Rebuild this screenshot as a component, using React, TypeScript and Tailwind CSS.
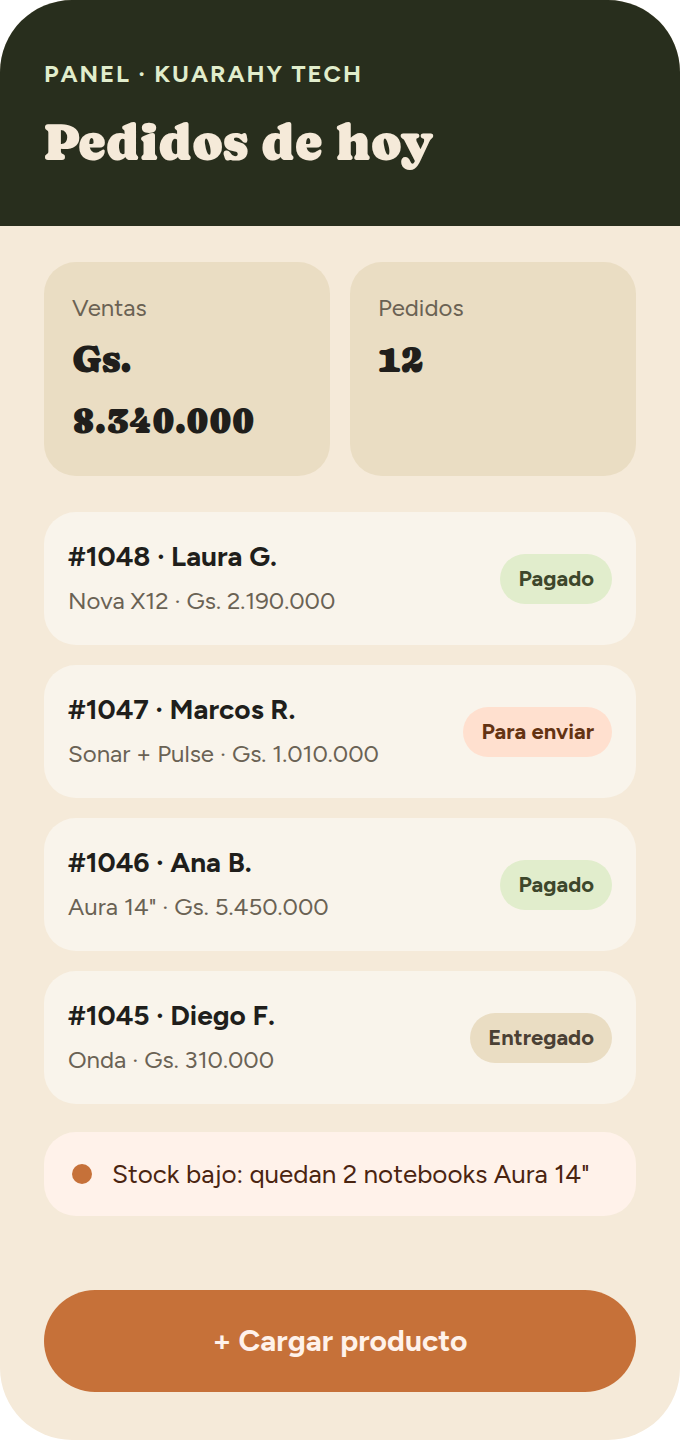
type OrderStatus = 'Pagado' | 'Para enviar' | 'Entregado';

interface Order {
  id: string;
  customer: string;
  detail: string;
  status: OrderStatus;
}

const orders: Order[] = [
  { id: '1048', customer: 'Laura G.', detail: 'Nova X12 · Gs. 2.190.000', status: 'Pagado' },
  { id: '1047', customer: 'Marcos R.', detail: 'Sonar + Pulse · Gs. 1.010.000', status: 'Para enviar' },
  { id: '1046', customer: 'Ana B.', detail: 'Aura 14" · Gs. 5.450.000', status: 'Pagado' },
  { id: '1045', customer: 'Diego F.', detail: 'Onda · Gs. 310.000', status: 'Entregado' },
];

const statusStyles: Record<OrderStatus, string> = {
  Pagado: 'bg-[#e1edcc] text-[#3d472b]',
  'Para enviar': 'bg-[#ffe0cf] text-[#643312]',
  Entregado: 'bg-[#eaddc3] text-[#4a4034]',
};

const stats = [
  { label: 'Ventas', value: 'Gs. 8.340.000' },
  { label: 'Pedidos', value: '12' },
];

const App = () => {
  return (
    <div className="min-h-screen bg-white font-['Figtree','Lato','Noto_Sans',sans-serif]">
      <main className="min-h-screen overflow-hidden rounded-[72px] bg-[#f5ead9] text-[#201e1b]">
        <header className="bg-[#282e1d] px-11 pt-14 pb-[42px]">
          <p className="text-2xl leading-9 font-bold tracking-[0.08em] text-[#e1edcc]">PANEL · KUARAHY TECH</p>
          <h1 className="mt-2 font-['Caprasimo','DejaVu_Serif',serif] text-[52px] leading-[84px] font-normal text-[#f5ead9]">
            Pedidos de hoy
          </h1>
        </header>

        <div className="px-11 pt-9 pb-12">
          <section className="grid grid-cols-2 gap-5">
            {stats.map((stat) => (
              <div key={stat.label} className="rounded-[32px] bg-[#eaddc3] px-7 pt-7 pb-[25px]">
                <p className="text-2xl leading-9 text-[#6a6254]">{stat.label}</p>
                <p className="mt-[3px] font-['Caprasimo','DejaVu_Serif',serif] text-[38px] leading-[61px]">{stat.value}</p>
              </div>
            ))}
          </section>

          <ul className="mt-9 flex flex-col gap-5">
            {orders.map((order) => (
              <li
                key={order.id}
                className="flex items-center justify-between rounded-[32px] bg-[#f9f4eb] p-6"
              >
                <div>
                  <p className="text-[28px] leading-[41px] font-bold">
                    #{order.id} · {order.customer}
                  </p>
                  <p className="mt-1 text-2xl leading-10 text-[#6a6254]">{order.detail}</p>
                </div>
                <span className={`rounded-full px-[18px] py-2 text-[22px] leading-[34px] font-bold ${statusStyles[order.status]}`}>
                  {order.status}
                </span>
              </li>
            ))}
          </ul>

          <div className="mt-7 flex items-center gap-5 rounded-[32px] bg-[#fff2ea] px-7 py-[22px] text-[#4a2410]">
            <span className="size-5 shrink-0 rounded-full bg-[#c67139]" />
            <p className="text-[26px] leading-10">Stock bajo: quedan 2 notebooks Aura 14"</p>
          </div>

          <button
            type="button"
            className="mt-[74px] w-full rounded-full bg-[#c67139] py-7 text-[30px] leading-[46px] font-bold text-[#fff2ea]"
          >
            + Cargar producto
          </button>
        </div>
      </main>
    </div>
  );
};

export default App;
